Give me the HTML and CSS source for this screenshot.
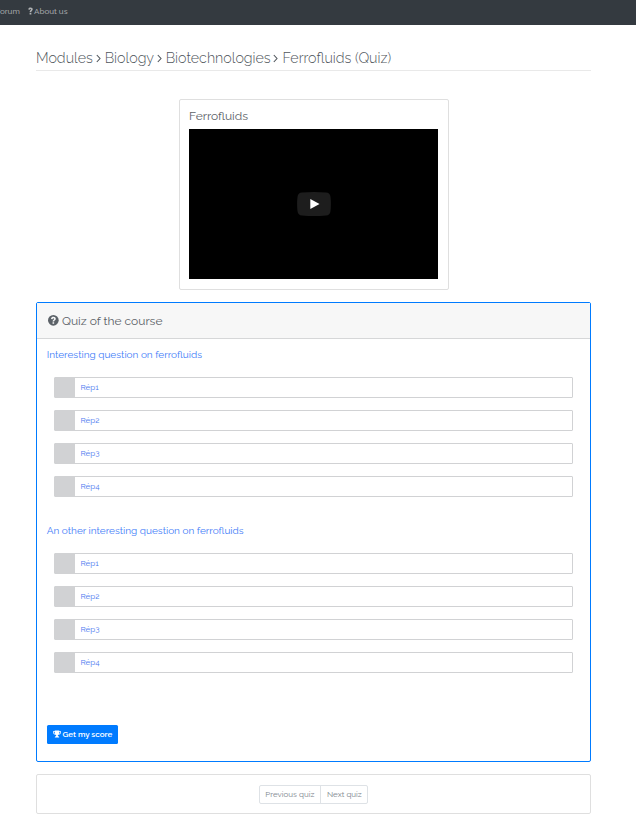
FILE: index.html
```html
<!DOCTYPE html>
<html lang="en">
<head>
<meta charset="utf-8">
<title>Ferrofluids (Quiz)</title>
<link rel="stylesheet" href="styles.css">
</head>
<body>
<nav class="navbar"><a class="forum">Forum</a><a class="about"><svg class="q-icon" viewBox="0 0 10 16"><path d="M.5 5C.8 1.900 2.500 1 5.200 1 7.800 1 9.500 2.500 9.500 4.700 9.500 7.600 6.600 7.600 6.600 10H3.200C3.100 7 5.900 6.700 5.900 4.900 5.900 3.700 4.200 3.600 3.700 5.400ZM3.200 11.300H6.700V14.800H3.200Z"/></svg><span>About us</span></a></nav>
<main class="page">
  <h1 class="crumbs"><span class="c1">Modules</span><svg class="sep" viewBox="0 0 5 9"><path d="M.8 1L4 4.500L.8 8"/></svg><span class="c2">Biology</span><svg class="sep" viewBox="0 0 5 9"><path d="M.8 1L4 4.500L.8 8"/></svg><span class="c3">Biotechnologies</span><svg class="sep" viewBox="0 0 5 9"><path d="M.8 1L4 4.500L.8 8"/></svg><span>Ferrofluids (Quiz)</span></h1>
  <section class="card video-card">
    <h2 class="video-title">Ferrofluids</h2>
    <div class="video"><svg class="play" viewBox="0 0 34 24"><path fill="#1d1d1d" d="M5 .5Q17-.5 29 .5Q33 .7 33.500 5Q34.300 12 33.500 19Q33 23.300 29 23.500Q17 24.500 5 23.500Q1 23.300.5 19Q-.3 12 .5 5Q1 .7 5 .5Z"/><path fill="#fff" d="M13.300 7V17L22.500 12Z"/></svg></div>
  </section>
  <section class="card quiz">
    <header class="quiz-head"><svg class="help" viewBox="0 0 16 16"><circle cx="8" cy="8" r="8" fill="#5c6268"/><path fill="#f7f7f7" d="M4.500 6C4.700 3.600 6 2.700 8.100 2.700 10.200 2.700 11.700 3.900 11.700 5.700 11.700 8.100 9.200 8 9.200 9.800H6.800C6.700 7.400 9.200 7.200 9.200 5.900 9.200 4.700 7.100 4.600 6.700 6.400ZM6.800 10.700H9.200V13.100H6.800Z"/></svg><span>Quiz of the course</span></header>
    <div class="quiz-body">
      <h3 class="question">Interesting question on ferrofluids</h3>
      <ul class="answers">
        <li><b></b><span>Rép1</span></li>
        <li><b></b><span>Rép2</span></li>
        <li><b></b><span>Rép3</span></li>
        <li><b></b><span>Rép4</span></li>
      </ul>
      <h3 class="question">An other interesting question on ferrofluids</h3>
      <ul class="answers">
        <li><b></b><span>Rép1</span></li>
        <li><b></b><span>Rép2</span></li>
        <li><b></b><span>Rép3</span></li>
        <li><b></b><span>Rép4</span></li>
      </ul>
      <button class="score"><svg class="trophy" viewBox="0 0 16 16"><path fill="#fff" fill-rule="evenodd" d="M3.500 1H12.500V2.500H16V5.500Q15 9 11 9.500 9.500 10 9.500 12 12.500 12.300 12.500 15H3.500Q3.500 12.300 6.500 12 6.500 10 5 9.500 1 9 0 5.500V2.500H3.500ZM1.500 4V5.300Q2 7 3.500 7.500V4ZM14.500 4H12.500V7.500Q14 7 14.500 5.300Z"/></svg><span>Get my score</span></button>
    </div>
  </section>
  <section class="card pager"><div class="group"><a class="prev">Previous quiz</a><a class="next">Next quiz</a></div></section>
</main>
</body>
</html>
```
FILE: styles.css
```css
* { box-sizing: border-box; }
body { margin: 0; background: #fff; color: #5c6268; font-family: Raleway, Lato, "Open Sans", sans-serif; overflow-x: hidden; }
h1, h2, h3, ul { margin: 0; padding: 0; font-weight: 400; }
.navbar { height: 25px; background: #343a40; display: flex; align-items: center; padding-bottom: 3px; color: #a4a7aa; font-size: 8px; font-weight: 500; white-space: nowrap; }
.forum { width: 26px; margin-left: -4.500px; margin-right: 6.500px; }
.about { display: flex; align-items: center; gap: 1px; }
.q-icon { width: 5px; height: 8px; fill: #b0b2b4; }
.page { margin: 0 45px 0 36px; }
.crumbs { height: 46px; padding-top: 20px; border-bottom: 1px solid #e9e9e9; font-size: 14.250px; line-height: 22px; display: flex; align-items: center; font-weight: 300; white-space: nowrap; color: #50565c; }
.sep { width: 5px; height: 9px; flex: none; fill: none; stroke: #50565c; stroke-width: 1.100; margin: 2px 4px 0 0; }
.c1 { width: 59.700px; }
.c2 { width: 52px; }
.c3 { width: 107.700px; }
.card { border: 1px solid #dfdfdf; border-radius: 2px; }
.video-card { width: 270px; height: 191px; margin: 28px 0 0 143px; padding: 9px; }
.video-title { font-size: 12px; line-height: 15px; height: 20px; }
.video { width: 249px; height: 150px; background: #000; display: flex; align-items: center; justify-content: center; }
.play { width: 34px; height: 24px; }
.quiz { height: 460px; margin-top: 12px; border-color: #007bff; }
.quiz-head { height: 36px; background: #f7f7f7; border-bottom: 1px solid #d6d7d8; display: flex; align-items: center; padding-left: 11.300px; gap: 3px; font-size: 12px; }
.help { width: 10.700px; height: 10.700px; }
.quiz-body { padding: 8px 17px 0 10px; }
.question { font-size: 10px; line-height: 15px; height: 30px; margin-left: -.3px; color: #3f7df8; white-space: nowrap; }
.answers { list-style: none; margin-left: 7px; display: grid; gap: 12px; margin-bottom: 26px; }
.answers li { height: 21px; border: 1px solid #d1d2d4; border-radius: 1px; display: flex; align-items: center; color: #4c78f0; font-size: 8px; line-height: 10px; }
.answers span { padding-bottom: 1px; }
.answers b { width: 20px; height: 19px; background: #d1d2d4; margin-right: 5.500px; }
.score { display: flex; align-items: center; gap: 1.500px; width: 71px; height: 19px; margin-top: 52px; padding: 0 0 1px 6px; border: 0; border-radius: 1.500px; background: #007bff; color: #fff; font: 600 8px Raleway, Lato, sans-serif; white-space: nowrap; }
.trophy { width: 8px; height: 8px; }
.pager { height: 40px; margin-top: 12px; display: flex; align-items: center; justify-content: center; }
.group { display: flex; width: 109px; height: 19px; border: 1px solid #dee2e6; border-radius: 2px; font-size: 8px; line-height: 17px; color: #7c848c; white-space: nowrap; }
.prev { width: 61px; padding-left: 5.300px; border-right: 1px solid #dee2e6; }
.next { padding-left: 6px; }
```
